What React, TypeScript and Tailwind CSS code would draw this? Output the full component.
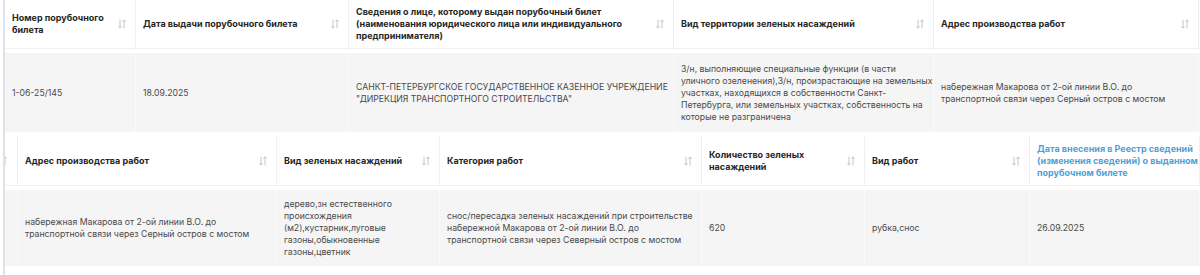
import React from "react";

const SortIcon = () => (
  <svg
    width="8"
    height="10"
    viewBox="0 0 8 10"
    fill="none"
    stroke="#c6c6c6"
    strokeWidth="1"
    strokeLinecap="round"
    strokeLinejoin="round"
    className="shrink-0"
  >
    <path d="M2 1v8M0.6 7.6L2 9l1.4-1.4" />
    <path d="M6 9V1M4.6 2.4L6 1l1.4 1.4" />
  </svg>
);

type HProps = {
  w: string;
  lines: string[];
  sort?: boolean;
  blue?: boolean;
};

const HeadCell = ({ w, lines, sort = true, blue = false }: HProps) => (
  <div
    className={`${w} shrink-0 h-full flex items-center justify-between pl-[7px] pr-[9px] border-r border-[#f0f0f0]`}
  >
    <div
      className={`font-bold text-[9px] leading-[12px] ${
        blue ? "text-[#4f9fd6]" : "text-[#262626]"
      }`}
    >
      {lines.map((l, i) => (
        <div key={i} className="whitespace-nowrap">
          {l}
        </div>
      ))}
    </div>
    {sort && <SortIcon />}
  </div>
);

const DataCell = ({ w, lines }: { w: string; lines: string[] }) => (
  <div
    className={`${w} shrink-0 h-full flex items-center pl-[7px] pr-[7px] border-r border-[#fbfbfb]`}
  >
    <div className="text-[8.7px] leading-[12px] text-[#4a4a4a]">
      {lines.map((l, i) => (
        <div key={i} className="whitespace-nowrap">
          {l}
        </div>
      ))}
    </div>
  </div>
);

export default function App() {
  return (
    <div
      className="w-[1200px] h-[275px] overflow-hidden bg-white flex"
      style={{ fontFamily: "Inter, 'Noto Sans', Arial, sans-serif" }}
    >
      <div className="w-[3px] shrink-0 bg-white" />
      <div className="w-[2px] shrink-0 bg-[#dde2e9]" />
      <div className="flex flex-col">
        {/* top table header */}
        <div className="flex h-[49px] border-b border-[#f2f2f2]">
          <HeadCell w="w-[131px]" lines={["Номер порубочного", "билета"]} />
          <HeadCell w="w-[213px]" lines={["Дата выдачи порубочного билета"]} />
          <HeadCell
            w="w-[325px]"
            lines={[
              "Сведения о лице, которому выдан порубочный билет",
              "(наименования юридического лица или индивидуального",
              "предпринимателя)",
            ]}
          />
          <HeadCell w="w-[260px]" lines={["Вид территории зеленых насаждений"]} />
          <HeadCell w="w-[265px]" lines={["Адрес производства работ"]} />
        </div>
        {/* top table data */}
        <div className="flex h-[79px] mt-[4px] bg-[#f5f5f5]">
          <DataCell w="w-[131px]" lines={["1-06-25/145"]} />
          <DataCell w="w-[213px]" lines={["18.09.2025"]} />
          <DataCell
            w="w-[325px]"
            lines={[
              "САНКТ-ПЕТЕРБУРГСКОЕ ГОСУДАРСТВЕННОЕ КАЗЕННОЕ УЧРЕЖДЕНИЕ",
              "\"ДИРЕКЦИЯ ТРАНСПОРТНОГО СТРОИТЕЛЬСТВА\"",
            ]}
          />
          <DataCell
            w="w-[260px]"
            lines={[
              "З/н, выполняющие специальные функции (в части",
              "уличного озеленения),З/н, произрастающие на земельных",
              "участках, находящихся в собственности Санкт-",
              "Петербурга, или земельных участках, собственность на",
              "которые не разграничена",
            ]}
          />
          <DataCell
            w="w-[265px]"
            lines={[
              "набережная Макарова от 2-ой линии В.О. до",
              "транспортной связи через Серный остров с мостом",
            ]}
          />
        </div>

        {/* bottom table header */}
        <div className="flex h-[50px] mt-[4px] border-b border-[#f2f2f2]">
          <div className="w-[13px] shrink-0 h-full overflow-hidden flex items-center justify-end pr-[10px] border-r border-[#f0f0f0]">
            <SortIcon />
          </div>
          <HeadCell w="w-[259px]" lines={["Адрес производства работ"]} />
          <HeadCell w="w-[163px]" lines={["Вид зеленых насаждений"]} />
          <HeadCell w="w-[262px]" lines={["Категория работ"]} />
          <HeadCell w="w-[163px]" lines={["Количество зеленых", "насаждений"]} />
          <HeadCell w="w-[165px]" lines={["Вид работ"]} />
          <HeadCell
            w="w-[170px]"
            blue
            sort={false}
            lines={[
              "Дата внесения в Реестр сведений",
              "(изменения сведений) о выданном",
              "порубочном билете",
            ]}
          />
        </div>
        {/* bottom table data */}
        <div className="flex h-[76px] mt-[4px] bg-[#f5f5f5]">
          <div className="w-[13px] shrink-0 h-full border-r border-[#fbfbfb]" />
          <DataCell
            w="w-[259px]"
            lines={[
              "набережная Макарова от 2-ой линии В.О. до",
              "транспортной связи через Серный остров с мостом",
            ]}
          />
          <DataCell
            w="w-[163px]"
            lines={[
              "дерево,зн естественного",
              "происхождения",
              "(м2),кустарник,луговые",
              "газоны,обыкновенные",
              "газоны,цветник",
            ]}
          />
          <DataCell
            w="w-[262px]"
            lines={[
              "снос/пересадка зеленых насаждений при строительстве",
              "набережной Макарова от 2-ой линии В.О. до",
              "транспортной связи через Северный остров с мостом",
            ]}
          />
          <DataCell w="w-[163px]" lines={["620"]} />
          <DataCell w="w-[165px]" lines={["рубка,снос"]} />
          <DataCell w="w-[170px]" lines={["26.09.2025"]} />
        </div>
      </div>
    </div>
  );
}
